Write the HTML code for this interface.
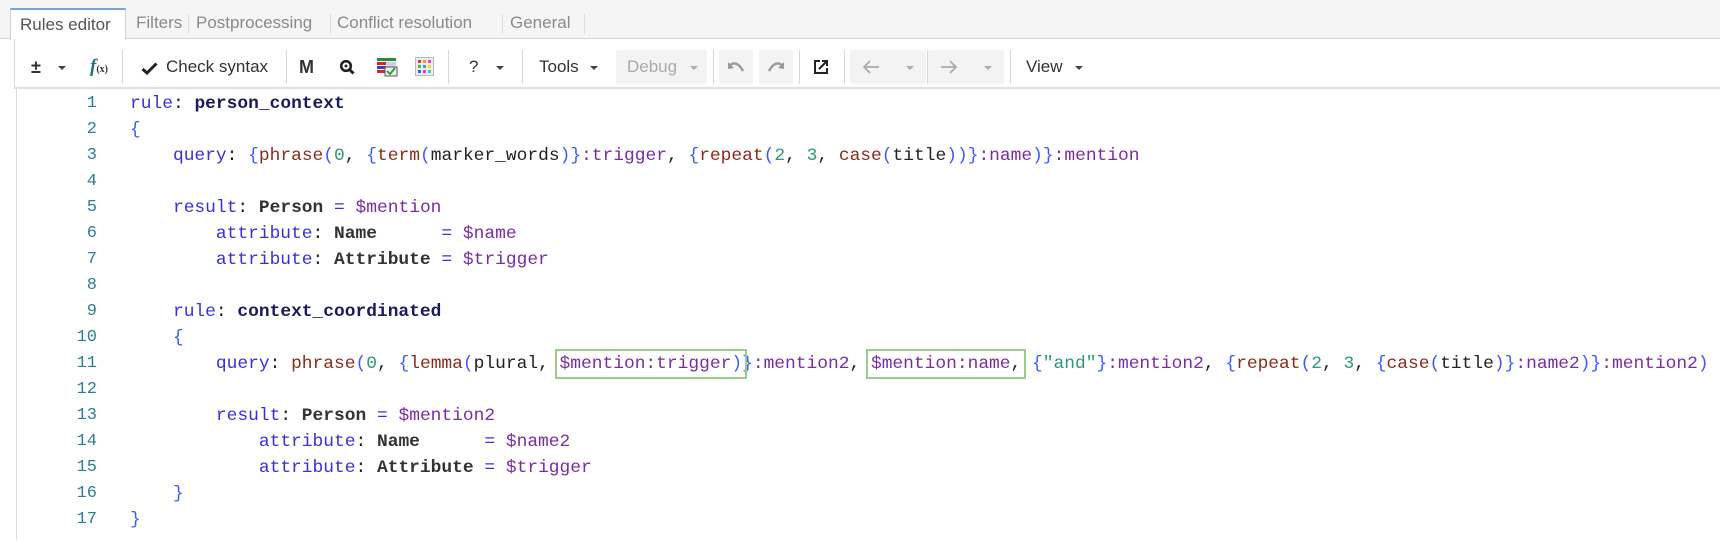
<!DOCTYPE html>
<html><head><meta charset="utf-8"><style>
*{margin:0;padding:0;box-sizing:border-box}
body{width:1720px;height:540px;overflow:hidden;background:#fff;font-family:"Liberation Sans",sans-serif;position:relative}
.tabbar{position:absolute;left:0;top:0;width:1720px;height:39px;background:#f5f5f5;border-bottom:1px solid #d6d6d6}
.tab{position:absolute;top:8px;height:31px;font-size:17px;color:#8a8a8a;line-height:30px;padding-left:0}
.tab.active{background:#fff;border:1px solid #d0d0d0;border-top:2px solid #7aa6d6;border-bottom:none;color:#555;height:32px}
.tsep{position:absolute;top:14px;width:1px;height:20px;background:#ddd}
.toolbar{position:absolute;left:14px;top:39px;width:1706px;height:50px;border-left:1px solid #ddd;border-bottom:2px solid #e0e0e0}
.t{position:absolute;font-size:17px;color:#333;top:57px;line-height:20px}
.sep{position:absolute;top:50px;width:1px;height:34px;background:#d8d8d8}
.btnbg{position:absolute;top:50px;height:34px;background:#f3f3f3;border-radius:2px}
.caret{position:absolute;top:66px;width:0;height:0;border-left:4px solid transparent;border-right:4px solid transparent;border-top:4px solid #444}
.editor{position:absolute;left:16px;top:89px;width:1704px;height:451px;border-left:1px solid #ddd}
.code{position:absolute;left:0;top:91px;font-family:"Liberation Mono",monospace;font-size:17.9px;line-height:26px;white-space:pre}
.ln{position:absolute;left:40px;width:57px;text-align:right;color:#2b7f95;font-family:"Liberation Mono",monospace;font-size:17px;line-height:26px}
.l{position:absolute;left:130px;height:26px}
.k{color:#3a2fd8}.n{color:#1a1a60;font-weight:bold}.b{color:#3d5afe}.f{color:#8a2c1a}.num{color:#2a9a74}.v{color:#7b2ca0}.p{color:#222}.c{color:#333;font-weight:bold}.s{color:#2a9a74}
.box{outline:2px solid #9ccc8c;outline-offset:3px}
</style></head><body>
<div class="tabbar"></div>
<div class="tab active" style="left:10px;width:116px;padding-left:9px">Rules editor</div>
<div class="tab" style="left:136px">Filters</div>
<div class="tsep" style="left:188px"></div>
<div class="tab" style="left:196px">Postprocessing</div>
<div class="tsep" style="left:330px"></div>
<div class="tab" style="left:337px">Conflict resolution</div>
<div class="tsep" style="left:502px"></div>
<div class="tab" style="left:510px">General</div>
<div class="tsep" style="left:584px"></div>

<div class="toolbar"></div>
<div class="t" style="left:31px;font-weight:bold;font-size:18px">±</div>
<div class="caret" style="left:58px"></div>
<div class="t" style="left:90px;color:#2a6f80;font-style:italic;font-family:'Liberation Serif',serif;font-weight:bold;font-size:19px">f<span style="font-size:10px;font-style:normal;color:#333">(x)</span></div>
<div class="sep" style="left:122px"></div>
<svg style="position:absolute;left:141px;top:62px" width="17" height="13"><path d="M1.5 7 L6 11 L15.5 1.5" stroke="#222" stroke-width="3" fill="none"/></svg>
<div class="t" style="left:166px">Check syntax</div>
<div class="sep" style="left:286px"></div>
<div class="t" style="left:299px;font-weight:bold;font-size:18px;color:#333">M</div>
<svg style="position:absolute;left:339px;top:59px" width="16" height="16"><circle cx="7" cy="7" r="4.8" stroke="#222" stroke-width="2.6" fill="none"/><circle cx="7" cy="7" r="1.5" fill="#222"/><path d="M10.5 10.5 L14.5 14.5" stroke="#222" stroke-width="3"/></svg>
<svg style="position:absolute;left:377px;top:58px" width="21" height="19"><rect x="0" y="0" width="19" height="3" fill="#2d8a3a"/><rect x="0" y="4" width="9" height="3" fill="#d22"/><rect x="0" y="8" width="9" height="3" fill="#2a4bc8"/><rect x="0" y="12" width="9" height="3" fill="#d22"/><rect x="9" y="4" width="10" height="11" fill="#c8d4e8"/><rect x="8" y="9" width="12" height="9" fill="#eee" stroke="#555"/><path d="M10 13 L13 16 L18 10" stroke="#2a9a3a" stroke-width="1.8" fill="none"/></svg>
<svg style="position:absolute;left:415px;top:57px" width="19" height="19"><rect x="0.5" y="0.5" width="18" height="18" fill="#eee" stroke="#bbb"/><g><rect x="3" y="3" width="3" height="3" fill="#e33"/><rect x="8" y="3" width="3" height="3" fill="#f90"/><rect x="13" y="3" width="3" height="3" fill="#e3e"/><rect x="3" y="8" width="3" height="3" fill="#3c3"/><rect x="8" y="8" width="3" height="3" fill="#39f"/><rect x="13" y="8" width="3" height="3" fill="#fd0"/><rect x="3" y="13" width="3" height="3" fill="#36f"/><rect x="8" y="13" width="3" height="3" fill="#f3a"/><rect x="13" y="13" width="3" height="3" fill="#3cc"/></g></svg>
<div class="sep" style="left:448px"></div>
<div class="t" style="left:469px">?</div>
<div class="caret" style="left:496px"></div>
<div class="sep" style="left:522px"></div>
<div class="t" style="left:539px">Tools</div>
<div class="caret" style="left:590px"></div>
<div class="btnbg" style="left:616px;width:91px"></div>
<div class="t" style="left:627px;color:#aaa">Debug</div>
<div class="caret" style="left:690px;border-top-color:#aaa"></div>
<div class="sep" style="left:713px"></div>
<div class="btnbg" style="left:719px;width:34px"></div>
<div class="btnbg" style="left:759px;width:34px"></div>
<svg style="position:absolute;left:727px;top:60px" width="18" height="14"><path d="M3 5 Q10 0 16 11" stroke="#999" stroke-width="2.4" fill="none"/><path d="M1 2 L1 9 L7 8 Z" fill="#999"/></svg>
<svg style="position:absolute;left:767px;top:60px" width="18" height="14"><path d="M15 5 Q8 0 2 11" stroke="#999" stroke-width="2.4" fill="none"/><path d="M17 2 L17 9 L11 8 Z" fill="#999"/></svg>
<div class="sep" style="left:799px"></div>
<svg style="position:absolute;left:813px;top:59px" width="16" height="16"><path d="M7 2 H2 V14 H14 V9" stroke="#222" stroke-width="2" fill="none"/><path d="M6 10 L14 2 M9 2 H14 V7" stroke="#222" stroke-width="2" fill="none"/></svg>
<div class="sep" style="left:844px"></div>
<div class="btnbg" style="left:850px;width:76px"></div>
<div class="btnbg" style="left:928px;width:76px"></div>
<svg style="position:absolute;left:862px;top:60px" width="18" height="14"><path d="M17 7 H2 M8 1 L2 7 L8 13" stroke="#aaa" stroke-width="1.8" fill="none"/></svg>
<div class="caret" style="left:906px;border-top-color:#aaa"></div>
<div class="sep" style="left:927px"></div>
<svg style="position:absolute;left:940px;top:60px" width="18" height="14"><path d="M1 7 H16 M10 1 L16 7 L10 13" stroke="#aaa" stroke-width="1.8" fill="none"/></svg>
<div class="caret" style="left:984px;border-top-color:#aaa"></div>
<div class="sep" style="left:1010px"></div>
<div class="t" style="left:1026px">View</div>
<div class="caret" style="left:1075px"></div>

<div class="editor"></div>
<div class="code">
<div class="ln" style="top:0">1</div><div class="l" style="top:0"><span class="k">rule</span><span class="p">: </span><span class="n">person_context</span></div>
<div class="ln" style="top:26px">2</div><div class="l" style="top:26px"><span class="b">{</span></div>
<div class="ln" style="top:52px">3</div><div class="l" style="top:52px">    <span class="k">query</span><span class="p">: </span><span class="b">{</span><span class="f">phrase</span><span class="b">(</span><span class="num">0</span><span class="p">, </span><span class="b">{</span><span class="f">term</span><span class="b">(</span><span class="p">marker_words</span><span class="b">)}</span><span class="v">:trigger</span><span class="p">, </span><span class="b">{</span><span class="f">repeat</span><span class="b">(</span><span class="num">2</span><span class="p">, </span><span class="num">3</span><span class="p">, </span><span class="f">case</span><span class="b">(</span><span class="p">title</span><span class="b">))}</span><span class="v">:name</span><span class="b">)}</span><span class="v">:mention</span></div>
<div class="ln" style="top:78px">4</div>
<div class="ln" style="top:104px">5</div><div class="l" style="top:104px">    <span class="k">result</span><span class="p">: </span><span class="c">Person</span> <span class="k">=</span> <span class="v">$mention</span></div>
<div class="ln" style="top:130px">6</div><div class="l" style="top:130px">        <span class="k">attribute</span><span class="p">: </span><span class="c">Name</span>      <span class="k">=</span> <span class="v">$name</span></div>
<div class="ln" style="top:156px">7</div><div class="l" style="top:156px">        <span class="k">attribute</span><span class="p">: </span><span class="c">Attribute</span> <span class="k">=</span> <span class="v">$trigger</span></div>
<div class="ln" style="top:182px">8</div>
<div class="ln" style="top:208px">9</div><div class="l" style="top:208px">    <span class="k">rule</span><span class="p">: </span><span class="n">context_coordinated</span></div>
<div class="ln" style="top:234px">10</div><div class="l" style="top:234px">    <span class="b">{</span></div>
<div class="ln" style="top:260px">11</div><div class="l" style="top:260px">        <span class="k">query</span><span class="p">: </span><span class="f">phrase</span><span class="b">(</span><span class="num">0</span><span class="p">, </span><span class="b">{</span><span class="f">lemma</span><span class="b">(</span><span class="p">plural, </span><span class="box"><span class="v">$mention:trigger</span><span class="b">)</span></span><span class="b">}</span><span class="v">:mention2</span><span class="p">, </span><span class="box"><span class="v">$mention:name</span><span class="p">,</span></span><span class="p"> </span><span class="b">{</span><span class="s">"and"</span><span class="b">}</span><span class="v">:mention2</span><span class="p">, </span><span class="b">{</span><span class="f">repeat</span><span class="b">(</span><span class="num">2</span><span class="p">, </span><span class="num">3</span><span class="p">, </span><span class="b">{</span><span class="f">case</span><span class="b">(</span><span class="p">title</span><span class="b">)}</span><span class="v">:name2</span><span class="b">)}</span><span class="v">:mention2</span><span class="b">)</span></div>
<div class="ln" style="top:286px">12</div>
<div class="ln" style="top:312px">13</div><div class="l" style="top:312px">        <span class="k">result</span><span class="p">: </span><span class="c">Person</span> <span class="k">=</span> <span class="v">$mention2</span></div>
<div class="ln" style="top:338px">14</div><div class="l" style="top:338px">            <span class="k">attribute</span><span class="p">: </span><span class="c">Name</span>      <span class="k">=</span> <span class="v">$name2</span></div>
<div class="ln" style="top:364px">15</div><div class="l" style="top:364px">            <span class="k">attribute</span><span class="p">: </span><span class="c">Attribute</span> <span class="k">=</span> <span class="v">$trigger</span></div>
<div class="ln" style="top:390px">16</div><div class="l" style="top:390px">    <span class="b">}</span></div>
<div class="ln" style="top:416px">17</div><div class="l" style="top:416px"><span class="b">}</span></div>
</div>
</body></html>
